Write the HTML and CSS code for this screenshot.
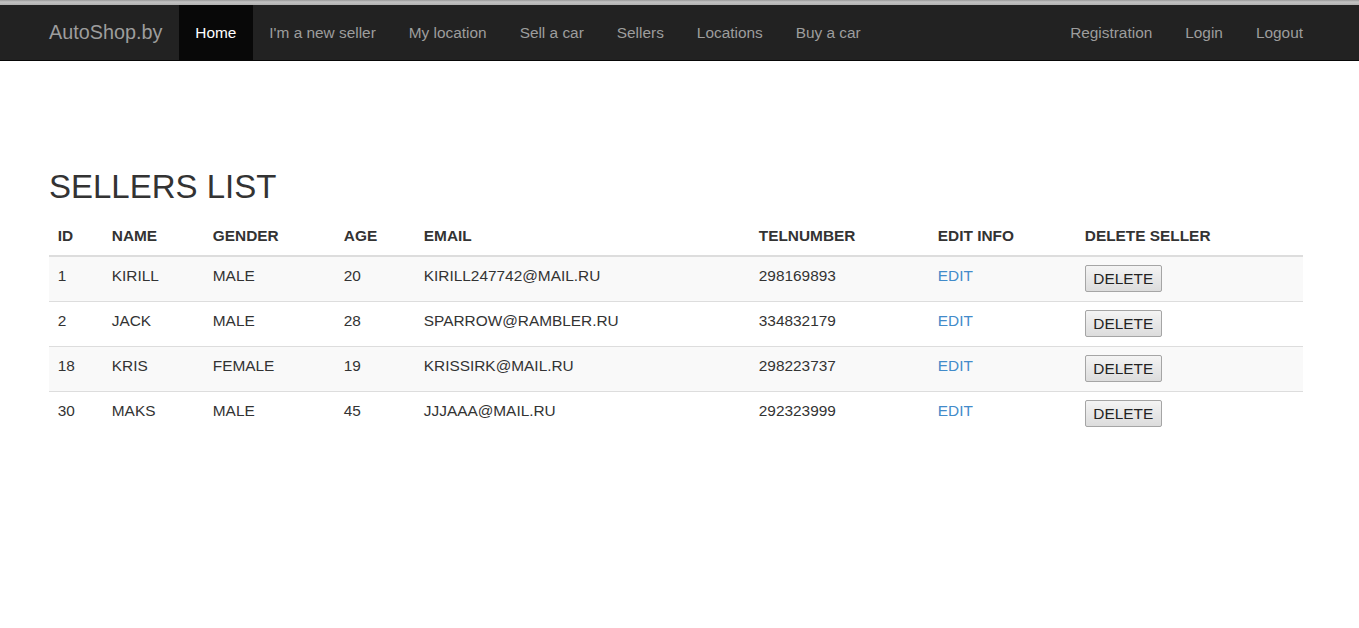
FILE: index.html
```html
<!DOCTYPE html>
<html lang="en">
<head>
<meta charset="utf-8">
<title>AutoShop.by - Sellers list</title>
<link rel="stylesheet" href="styles.css">
</head>
<body>
<div class="chrome-strip"></div>
<nav class="navbar">
  <div class="container nav-inner">
    <a class="brand" href="#">AutoShop.by</a>
    <ul class="nav">
      <li><a class="active" href="#">Home</a></li>
      <li><a href="#">I'm a new seller</a></li>
      <li><a href="#">My location</a></li>
      <li><a href="#">Sell a car</a></li>
      <li><a href="#">Sellers</a></li>
      <li><a href="#">Locations</a></li>
      <li><a href="#">Buy a car</a></li>
    </ul>
    <ul class="nav nav-right">
      <li><a href="#">Registration</a></li>
      <li><a href="#">Login</a></li>
      <li><a href="#">Logout</a></li>
    </ul>
  </div>
</nav>
<main class="container content">
  <h2 class="title">SELLERS LIST</h2>
  <table class="table">
    <colgroup>
      <col class="c-id"><col class="c-name"><col class="c-gender"><col class="c-age">
      <col class="c-email"><col class="c-tel"><col class="c-edit"><col class="c-del">
    </colgroup>
    <thead>
      <tr><th>ID</th><th>NAME</th><th>GENDER</th><th>AGE</th><th>EMAIL</th><th>TELNUMBER</th><th>EDIT INFO</th><th>DELETE SELLER</th></tr>
    </thead>
    <tbody>
      <tr><td>1</td><td>KIRILL</td><td>MALE</td><td>20</td><td>KIRILL247742@MAIL.RU</td><td>298169893</td><td><a class="edit" href="#">EDIT</a></td><td><button class="btn-del" type="button">DELETE</button></td></tr>
      <tr><td>2</td><td>JACK</td><td>MALE</td><td>28</td><td>SPARROW@RAMBLER.RU</td><td>334832179</td><td><a class="edit" href="#">EDIT</a></td><td><button class="btn-del" type="button">DELETE</button></td></tr>
      <tr><td>18</td><td>KRIS</td><td>FEMALE</td><td>19</td><td>KRISSIRK@MAIL.RU</td><td>298223737</td><td><a class="edit" href="#">EDIT</a></td><td><button class="btn-del" type="button">DELETE</button></td></tr>
      <tr><td>30</td><td>MAKS</td><td>MALE</td><td>45</td><td>JJJAAA@MAIL.RU</td><td>292323999</td><td><a class="edit" href="#">EDIT</a></td><td><button class="btn-del" type="button">DELETE</button></td></tr>
    </tbody>
  </table>
</main>
</body>
</html>
```
FILE: styles.css
```css
* { box-sizing: border-box; }
html, body { margin: 0; padding: 0; }
body {
  font-family: "Liberation Sans", Arial, Helvetica, sans-serif;
  font-size: 15.4px;
  line-height: 22px;
  color: #333;
  background: #fff;
}
a { text-decoration: none; }

.chrome-strip {
  height: 5px;
  background: linear-gradient(#9a9a9a, #c4c4c4 40%, #b0b0b0);
}

.container {
  width: 1254px;
  margin-left: 49px;
}

.navbar {
  background: #222;
  border-bottom: 1px solid #080808;
  height: 56px;
}
.nav-inner {
  display: flex;
  align-items: stretch;
  height: 55px;
}
.brand {
  font-size: 19.8px;
  line-height: 55px;
  color: #9d9d9d;
  padding-right: 16.5px;
}
.nav {
  list-style: none;
  margin: 0;
  padding: 0;
  display: flex;
}
.nav li { display: flex; }
.nav a {
  display: block;
  padding: 0 16.5px;
  line-height: 55px;
  color: #9d9d9d;
  font-size: 15.4px;
}
.nav a.active {
  background: #080808;
  color: #fff;
}
.nav-right {
  margin-left: auto;
  margin-right: -16.5px;
}

.content { padding-top: 108px; }
.title {
  margin: 0 0 10px;
  font-size: 33px;
  line-height: 36.3px;
  font-weight: 500;
  color: #333;
}

.table {
  width: 1254px;
  border-collapse: collapse;
  table-layout: fixed;
}
.c-id { width: 54px; }
.c-name { width: 101px; }
.c-gender { width: 131px; }
.c-age { width: 80px; }
.c-email { width: 335px; }
.c-tel { width: 179px; }
.c-edit { width: 147px; }
.c-del { width: 227px; }

.table th, .table td {
  text-align: left;
  vertical-align: top;
  line-height: 22px;
}
.table th {
  padding: 9.8px 8.8px 7.8px;
  font-weight: bold;
  border-bottom: 2px solid #ddd;
}
.table td {
  padding: 8px 8.8px 9px;
  border-top: 1px solid #ddd;
}
.table tbody tr:first-child td { border-top: 0; }
.table tbody tr:nth-child(odd) td { background: #f9f9f9; }

.edit { color: #428bca; }

.btn-del {
  display: inline-block;
  vertical-align: top;
  margin-top: 0;
  height: 27px;
  width: 77px;
  padding: 0;
  font-family: "Liberation Sans", Arial, sans-serif;
  font-size: 15.4px;
  line-height: 25px;
  color: #222;
  border: 1px solid #a5a5a5;
  border-radius: 2px;
  background: linear-gradient(#f4f4f4, #dcdcdc);
}
```
